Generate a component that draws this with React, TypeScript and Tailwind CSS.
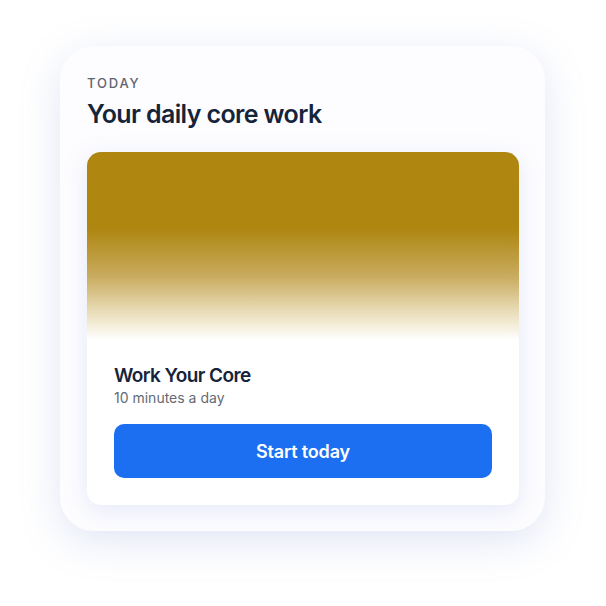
export default function App() {
  return (
    <div
      className="w-[606px] h-[606px] bg-white flex items-start justify-center pt-[46px]"
      style={{ fontFamily: "Inter, 'Liberation Sans', sans-serif" }}
    >
      <div className="w-[485px] h-[485px] ml-[-1px] rounded-[34px] bg-[#fdfdff] shadow-[0_10px_40px_rgba(120,140,210,0.22)] pl-[27px] pr-[26px] pt-[29px]">
        <p className="text-[13px] font-medium tracking-[0.14em] text-[#5d6470] leading-4">TODAY</p>
        <h1 className="mt-[7px] text-[25px] font-semibold tracking-[-0.025em] text-[#15243a] leading-8">
          Your daily core work
        </h1>
        <div className="mt-[22px] w-[432px] rounded-[14px] bg-white shadow-[0_6px_24px_rgba(120,140,210,0.18)] overflow-hidden">
          <div className="h-[192px] bg-[linear-gradient(to_bottom,#ae8610_0%,#ae8610_40%,#c9ac60_65%,#e9dcb7_83%,#ffffff_98%)]" />
          <div className="px-[27px] pt-[20px] pb-[27px]">
            <h2 className="text-[19px] font-semibold tracking-[-0.03em] text-[#15243a] leading-6">Work Your Core</h2>
            <p className="text-[14px] text-[#646b75] leading-5">10 minutes a day</p>
            <button className="mt-[16px] w-full h-[54px] rounded-[10px] bg-[#1d6ff2] text-white text-[18px] font-semibold tracking-[-0.01em]">
              Start today
            </button>
          </div>
        </div>
      </div>
    </div>
  );
}
